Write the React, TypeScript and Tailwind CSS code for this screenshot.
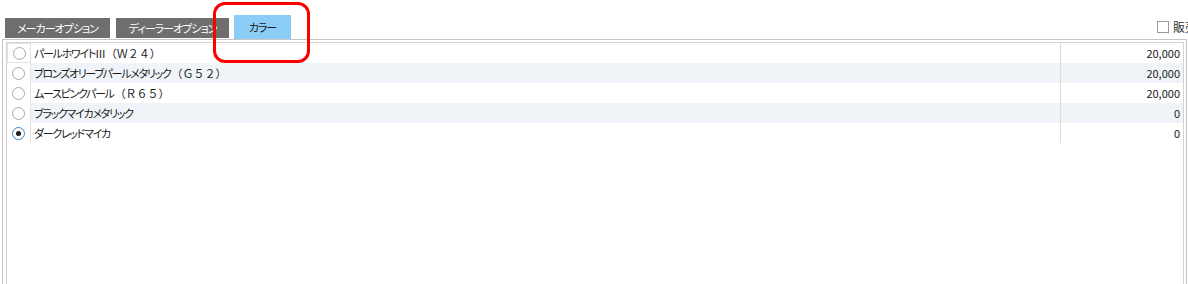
import React from "react";

const rows = [
  { name: "パールホワイトⅢ", code: "（Ｗ２４）", price: "20,000", checked: false },
  { name: "ブロンズオリーブパールメタリック", code: "（Ｇ５２）", price: "20,000", checked: false },
  { name: "ムースピンクパール", code: "（Ｒ６５）", price: "20,000", checked: false },
  { name: "ブラックマイカメタリック", code: "", price: "0", checked: false },
  { name: "ダークレッドマイカ", code: "", price: "0", checked: true },
];

const font = { fontFamily: '"Noto Sans CJK JP", "Noto Sans", sans-serif' };

function Radio({ checked }: { checked: boolean }) {
  return (
    <div
      className={`w-[13px] h-[13px] rounded-full border flex items-center justify-center bg-white ${
        checked ? "border-[#3a86c8]" : "border-[#a8a8a8]"
      }`}
    >
      {checked && <div className="w-[5px] h-[5px] rounded-full bg-[#1a1a1a]" />}
    </div>
  );
}

export default function App() {
  return (
    <div
      className="relative w-[1188px] h-[284px] bg-white overflow-hidden text-[11px] text-[#1a1a1a]"
      style={font}
    >
      {/* tabs header */}
      <div className="flex items-end h-[39px] pl-[5px] [font-feature-settings:'palt']">
        <div className="w-[105px] h-[20px] mb-[1px] bg-[#6e6e6e] text-white flex items-center justify-center whitespace-nowrap tracking-[-1px]">
          メーカーオプション
        </div>
        <div className="w-[113px] h-[20px] mb-[1px] ml-[6px] bg-[#6e6e6e] text-white flex items-center justify-center whitespace-nowrap tracking-[-1px]">
          ディーラーオプション
        </div>
        <div className="w-[57px] h-[24px] ml-[5px] bg-[#8ccdf8] text-[#1a1a1a] flex items-center justify-center whitespace-nowrap tracking-[-1px]">
          カラー
        </div>
        <div className="flex-1" />
        <div className="flex items-center gap-[4px] mb-[3px] w-[31px] whitespace-nowrap">
          <div className="w-[12px] h-[12px] border border-[#9a9a9a] bg-white shrink-0" />
          <span className="text-[#333] text-[12px]">販売店</span>
        </div>
      </div>

      {/* panel */}
      <div className="ml-[2px] w-[1185px] h-[260px] border border-b-0 border-[#c6c6c6] pl-[3px] pt-[2px] pr-[2px]">
        <div className="h-full border border-b-0 border-[#d4d4d4]">
          {rows.map((r, i) => (
            <div key={i} className="flex h-[20px]">
              <div
                className={`w-[24px] flex items-center justify-center border-r border-[#e2e2e2] ${
                  i === 0 ? "border border-[#a9d1f2]" : ""
                }`}
              >
                <Radio checked={r.checked} />
              </div>
              <div
                className={`flex flex-1 items-center ${
                  i % 2 === 1 ? "bg-[#f0f4f8]" : "bg-white"
                }`}
              >
                <div className="w-[1030px] h-full flex items-center pl-[3px] border-r border-[#dcdcdc] whitespace-nowrap">
                  <span className="[font-feature-settings:'palt'] tracking-[-1.3px]">{r.name}</span>
                  {r.code && <span className="text-[11px] ml-[1px]">{r.code}</span>}
                </div>
                <div className="flex-1 h-full flex items-center justify-end pr-[3px]">
                  {r.price}
                </div>
              </div>
            </div>
          ))}
        </div>
      </div>

      {/* red annotation */}
      <div className="absolute left-[213px] top-[2px] w-[97px] h-[61px] border-[3px] border-[#ff0000] rounded-[12px]" />
    </div>
  );
}
